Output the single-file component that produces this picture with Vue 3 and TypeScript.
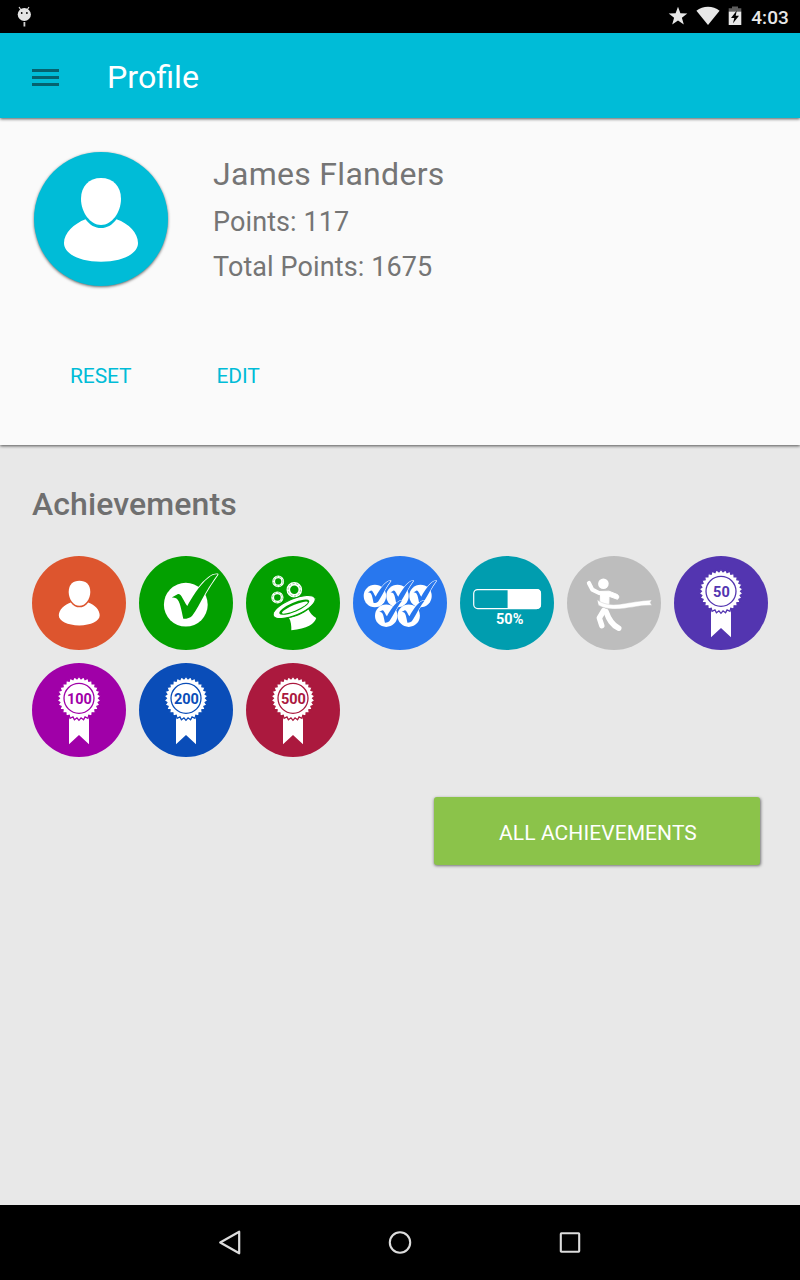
<script setup lang="ts">
interface Badge {
  kind: 'person' | 'check' | 'hat' | 'checks' | 'half' | 'runner' | 'medal'
  color: string
  label?: string
}

const badges: Badge[] = [
  { kind: 'person', color: '#dd552e' },
  { kind: 'check', color: '#03a000' },
  { kind: 'hat', color: '#03a000' },
  { kind: 'checks', color: '#2877ee' },
  { kind: 'half', color: '#009daf' },
  { kind: 'runner', color: '#bdbdbd' },
  { kind: 'medal', color: '#5335b0', label: '50' },
  { kind: 'medal', color: '#a000a8', label: '100' },
  { kind: 'medal', color: '#0a4db8', label: '200' },
  { kind: 'medal', color: '#ab193e', label: '500' },
]

const checkSpots = [
  { x: 21.9, y: 40 },
  { x: 44.5, y: 40 },
  { x: 67.5, y: 40 },
  { x: 33.2, y: 59.7 },
  { x: 55.7, y: 59.7 },
]

const rings = [
  { x: 32.2, y: 25.4, r: 4.5, w: 2.8 },
  { x: 48.3, y: 33.7, r: 6, w: 3.6 },
  { x: 31.4, y: 41.5, r: 4.7, w: 2.8 },
]

// Toothed seal outline: alternating outer and inner radius
const teeth = 30
const seal = Array.from({ length: teeth * 2 }, (_, i) => {
  const r = i % 2 === 0 ? 22 : 19.6
  const a = (Math.PI * i) / teeth + Math.PI / 2
  return `${(47 + r * Math.cos(a)).toFixed(2)},${(35.3 + r * Math.sin(a)).toFixed(2)}`
}).join(' ')

const tick =
  'M32.7 41.5 L39 37.9 C42.5 37.5 44 44 48.3 50 C52 43 60 29 70 21.5 C73 19 76 18 78.6 18.4 C76 22 71 29 66.5 37 C61.5 46 57.5 54 53 60 C51 62 47.5 63 44.3 62.8 C42.5 55 41 44.5 37.5 42.5 C36 41.5 34.5 41.5 32.7 41.5 Z'
</script>

<template>
  <div class="screen">
    <header class="status">
      <svg class="bug" width="16" height="22" viewBox="0 0 16 22">
        <path d="M3 1 L5 4 M13 1 L11 4" stroke="#e4e4e4" stroke-width="1.1" />
        <ellipse cx="8.3" cy="8.5" rx="6.6" ry="6.5" fill="#e4e4e4" />
        <circle cx="5.7" cy="7" r=".9" fill="#000" />
        <circle cx="10.9" cy="7" r=".9" fill="#000" />
        <path d="M8.4 16 V20.5" stroke="#d0d0d0" stroke-width="1.8" />
      </svg>
      <div class="tray">
        <svg width="20" height="20" viewBox="0 0 20 20">
          <path d="M10 .8 L12.4 7.2 L19.3 7.5 L13.9 11.8 L15.8 18.5 L10 14.6 L4.2 18.5 L6.1 11.8 L.7 7.5 L7.6 7.2 Z" fill="#e8e8e8" />
        </svg>
        <svg class="wifi" width="24" height="20" viewBox="0 0 24 20">
          <path d="M.4 4.8 C7 -.5 17 -.5 23.6 4.8 L12 19.1 Z" fill="#e8e8e8" />
        </svg>
        <svg class="battery" width="14" height="20" viewBox="0 0 14 20">
          <path d="M4 .5 H10 V2.3 H13.3 V5.5 H.7 V2.3 H4 Z" fill="#5e5e5e" />
          <path d="M.7 5.5 H13.3 V19 H.7 Z" fill="#e8e8e8" />
          <path d="M8.8 4.5 L3 12 H6.3 L5 17.3 L11 9.8 H7.7 Z" fill="#000" />
        </svg>
        <span class="clock">4:03</span>
      </div>
    </header>

    <div class="appbar">
      <svg width="27" height="18" viewBox="0 0 27 18">
        <path d="M0 0 H27 V3 H0 Z M0 7 H27 V10 H0 Z M0 14 H27 V17 H0 Z" fill="#05626f" />
      </svg>
      <h1>Profile</h1>
    </div>

    <section class="profile">
      <div class="identity">
        <div class="avatar">
          <svg width="134" height="134" viewBox="0 0 134 134">
            <path d="M67 26 C79 26 87 34 87 47 C87 60 78 73 67 73 C56 73 47 60 47 47 C47 34 55 26 67 26 Z" fill="#fff" />
            <path d="M51.5 67.2 C60 79 74 79 82.5 67.2 C95 71.5 104 81 104 91 C104 102 88 109.7 67 109.7 C46 109.7 30 102 30 91 C30 81 40 71.5 51.5 67.2 Z" fill="#fff" />
          </svg>
        </div>
        <div class="facts">
          <div class="name">James Flanders</div>
          <div class="points now">Points: 117</div>
          <div class="points total">Total Points: 1675</div>
        </div>
      </div>
      <div class="actions">
        <button class="reset">RESET</button>
        <button class="edit">EDIT</button>
      </div>
    </section>

    <main class="achievements">
      <h2>Achievements</h2>
      <div class="grid">
        <svg v-for="(b, n) in badges" :key="n" width="94" height="94" viewBox="0 0 94 94">
          <circle cx="47" cy="47" r="47" :fill="b.color" />

          <g v-if="b.kind === 'person'" fill="#fff">
            <path d="M47.4 24.7 C54 24.7 58.3 28.5 58.3 36 C58.3 43 53.5 49.8 47.4 49.8 C41.3 49.8 36.7 43 36.7 36 C36.7 28.5 41 24.7 47.4 24.7 Z" />
            <path d="M38.8 46.4 C43.5 53 51.5 53 56.2 46.4 C63 48.8 67.7 54 67.7 59.3 C67.7 65.2 59 69.4 47.3 69.4 C35.5 69.4 26.8 65.2 26.8 59.3 C26.8 54 32 48.8 38.8 46.4 Z" />
          </g>

          <g v-else-if="b.kind === 'check'">
            <circle cx="46.8" cy="48.7" r="21.9" fill="#fff" />
            <path :d="tick" class="tick" :fill="b.color" stroke="#fff" stroke-width="1.7" stroke-linejoin="round" />
          </g>

          <g v-else-if="b.kind === 'hat'">
            <g v-for="(r, i) in rings" :key="i" fill="none">
              <circle :cx="r.x" :cy="r.y" :r="r.r" stroke="#fff" :stroke-width="r.w" />
              <circle :cx="r.x" :cy="r.y" :r="r.r + 0.2" :stroke="b.color" stroke-width=".45" stroke-dasharray="2.2 1.6" />
            </g>
            <path d="M43 62 C50 61 57 57.5 62.5 53.5 C64 57 66.5 60 70.2 62 C69 67.5 61 73 45.3 74.2 C45.5 70 45 65 43 62 Z" fill="#fff" />
            <g transform="rotate(-23 48.2 51)">
              <ellipse cx="48.2" cy="51" rx="22.6" ry="8.2" fill="#fff" :stroke="b.color" stroke-width="1" />
              <ellipse cx="48.2" cy="51.2" rx="16.2" ry="4.6" :fill="b.color" />
              <ellipse cx="48.6" cy="51.8" rx="14" ry="2.8" fill="#fff" />
            </g>
          </g>

          <g v-else-if="b.kind === 'checks'">
            <g v-for="(s, i) in checkSpots" :key="i" :transform="`translate(${s.x - 23.4} ${s.y - 24.35}) scale(.5)`">
              <circle cx="46.8" cy="48.7" r="22.4" fill="#fff" />
              <path :d="tick" class="tick" :fill="b.color" stroke="#fff" stroke-width="2.2" stroke-linejoin="round" />
            </g>
          </g>

          <g v-else-if="b.kind === 'half'">
            <rect x="13.7" y="33.6" width="66.8" height="19" rx="4" fill="none" stroke="#fff" stroke-width="1.2" />
            <path d="M47.6 33.1 H76.5 Q81 33.1 81 37.5 V48.7 Q81 53.1 76.5 53.1 H47.6 Z" fill="#fff" />
            <text x="49.7" y="68" text-anchor="middle" class="digits" fill="#fff" textLength="27.5">50%</text>
          </g>

          <g v-else-if="b.kind === 'runner'" fill="none" stroke="#fff" stroke-linecap="round" stroke-linejoin="round">
            <circle cx="36.4" cy="27.7" r="5.3" fill="#fff" stroke="none" />
            <path d="M21.9 27 L25.3 33.6 L32 37" stroke-width="4.2" />
            <path d="M31 35.5 L42 35.2 L50.5 38.6 Q53.5 41 50.5 43.3 L42 40.3 L41.8 49 L33 49 L33.5 39 Z" fill="#fff" stroke-width="1" />
            <path d="M36.8 54.5 L32.3 62 L34.8 69.7" stroke-width="5.4" />
            <path d="M39 55.5 C42 64 45 69 51.8 72.3" stroke-width="5.4" />
            <path d="M30.2 43.8 C36 48.5 44 49.3 53 48.2 C63 47 73 44.5 84.8 44 L83.2 46.5 L84.8 49.2 C72 48.8 61 53 48 53 C41 53 35 51.5 31.5 49.2 Z" fill="#fff" :stroke="b.color" stroke-width=".4" />
          </g>

          <g v-else>
            <path d="M37 52 H57 V81.3 L47 72 L37 81.3 Z" fill="#fff" />
            <polygon :points="seal" fill="#fff" :stroke="b.color" stroke-width="1.3" />
            <circle cx="47" cy="35.3" r="15" fill="none" :stroke="b.color" stroke-width="1.3" />
            <text x="47.4" y="41" text-anchor="middle" class="digits" :fill="b.color">{{ b.label }}</text>
          </g>
        </svg>
      </div>
      <button class="all">ALL ACHIEVEMENTS</button>
    </main>

    <nav class="navbar">
      <svg width="24" height="26" viewBox="0 0 24 26">
        <path d="M2.2 13.5 L21.2 2.7 V24.3 Z" fill="none" stroke="#dcdcdc" stroke-width="2.2" stroke-linejoin="round" />
      </svg>
      <svg width="24" height="26" viewBox="0 0 24 26">
        <circle cx="12" cy="13.5" r="10.2" fill="none" stroke="#dcdcdc" stroke-width="2.1" />
      </svg>
      <svg width="24" height="26" viewBox="0 0 24 26">
        <rect x="2.8" y="4.3" width="18.4" height="18.4" rx=".6" fill="none" stroke="#dcdcdc" stroke-width="2.1" />
      </svg>
    </nav>
  </div>
</template>

<style>
body {
  margin: 0;
}
</style>

<style scoped>
.screen {
  width: 800px;
  height: 1280px;
  display: flex;
  flex-direction: column;
  background: #e8e8e8;
  font-family: Roboto, "Noto Sans", sans-serif;
  overflow: hidden;
}
svg {
  display: block;
  flex: none;
}
h1,
h2 {
  margin: 0;
}
button {
  border: 0;
  padding: 0;
  background: none;
  font: 400 21px/28px Roboto, sans-serif;
  white-space: nowrap;
}
.status {
  box-sizing: border-box;
  height: 33px;
  flex: none;
  display: flex;
  justify-content: space-between;
  background: #000;
  padding: 6px 11px 0 16px;
}
.tray {
  display: flex;
}
.wifi {
  margin-left: 8px;
}
.battery {
  margin-left: 8px;
}
.clock {
  margin-left: 9px;
  font-size: 19px;
  line-height: 23px;
  font-weight: 500;
  letter-spacing: 0.1px;
  color: #e8e8e8;
}
.appbar {
  height: 85px;
  flex: none;
  display: flex;
  align-items: center;
  padding-left: 32px;
  gap: 48px;
  background: #00bcd7;
  box-shadow: 0 1px 3px rgba(0, 0, 0, 0.65);
  z-index: 2;
}
.appbar svg {
  margin-top: 4px;
}
h1 {
  font-size: 32.2px;
  line-height: 40px;
  font-weight: 400;
  color: #fff;
  margin-top: 3px;
}
.profile {
  height: 327px;
  flex: none;
  background: #fafafa;
  box-shadow: 0 1px 3px rgba(0, 0, 0, 0.65);
  z-index: 1;
}
.identity {
  display: flex;
  padding: 34px 0 0 34px;
  gap: 45px;
}
.avatar {
  width: 134px;
  height: 134px;
  border-radius: 50%;
  background: #00bcd7;
  box-shadow: 0 1px 3px rgba(0, 0, 0, 0.6);
}
.facts {
  color: #757575;
}
.name {
  font-size: 32px;
  line-height: 44px;
  letter-spacing: 0.3px;
}
.points {
  font-size: 27px;
  line-height: 45px;
  letter-spacing: 0.1px;
}
.now {
  margin-top: 4px;
}
.actions {
  display: flex;
  gap: 85px;
  padding: 72px 0 0 70px;
}
.actions button {
  letter-spacing: -0.1px;
  color: #00bcd7;
}
.achievements {
  flex: 1;
  display: flex;
  flex-direction: column;
  padding: 39px 32px 0;
}
h2 {
  font-size: 32px;
  line-height: 40px;
  font-weight: 500;
  letter-spacing: 0.1px;
  color: #6f6f6f;
}
.grid {
  margin-top: 32px;
  display: grid;
  grid-template-columns: repeat(7, 94px);
  gap: 13px;
}
.tick {
  paint-order: stroke;
}
.digits {
  font: 700 14.5px Roboto, sans-serif;
}
.all {
  align-self: flex-end;
  width: 326px;
  height: 68px;
  margin: 40px 8px 0 0;
  padding: 3px 0 0 2px;
  border-radius: 3px;
  background: #8bc34a;
  letter-spacing: 0.08px;
  color: #fff;
  box-shadow: 0.5px 1px 3px rgba(0, 0, 0, 0.5);
}
.navbar {
  box-sizing: border-box;
  height: 75px;
  padding-bottom: 1px;
  flex: none;
  display: flex;
  justify-content: center;
  align-items: center;
  gap: 146px;
  background: #000;
}
</style>
